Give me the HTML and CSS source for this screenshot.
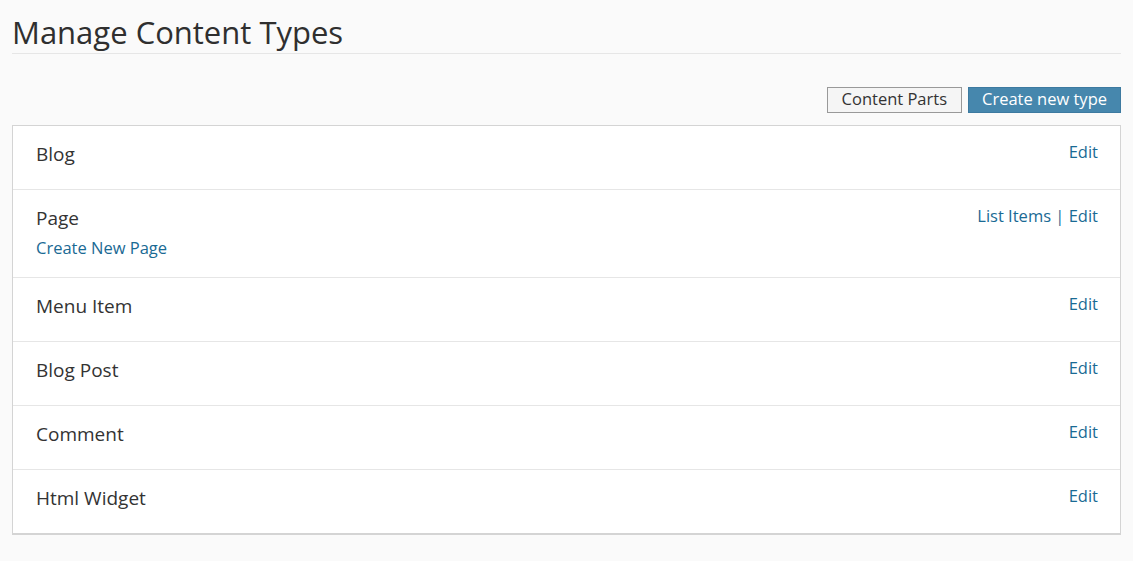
FILE: index.html
```html
<!DOCTYPE html>
<html>
<head>
<meta charset="utf-8">
<link rel="stylesheet" href="styles.css">
</head>
<body>
<div class="page">
  <h1 class="title">Manage Content Types</h1>
  <div class="actions">
    <button class="btn btn-default">Content Parts</button>
    <button class="btn btn-primary">Create new type</button>
  </div>
  <ul class="types">
    <li class="type">
      <div class="info"><div class="name">Blog</div></div>
      <div class="links"><a href="#">Edit</a></div>
    </li>
    <li class="type">
      <div class="info"><div class="name">Page</div><a class="create" href="#">Create New Page</a></div>
      <div class="links"><a href="#">List Items</a> <span class="sep">|</span> <a href="#">Edit</a></div>
    </li>
    <li class="type">
      <div class="info"><div class="name">Menu Item</div></div>
      <div class="links"><a href="#">Edit</a></div>
    </li>
    <li class="type">
      <div class="info"><div class="name">Blog Post</div></div>
      <div class="links"><a href="#">Edit</a></div>
    </li>
    <li class="type">
      <div class="info"><div class="name">Comment</div></div>
      <div class="links"><a href="#">Edit</a></div>
    </li>
    <li class="type">
      <div class="info"><div class="name">Html Widget</div></div>
      <div class="links"><a href="#">Edit</a></div>
    </li>
  </ul>
</div>
</body>
</html>
```
FILE: styles.css
```css
html, body {
  margin: 0;
  padding: 0;
  background: #fafafa;
}
body {
  font-family: "Open Sans", "Noto Sans", sans-serif;
  color: #333;
}
.page {
  padding: 12px 12px 0 12px;
  width: 1109px;
}
.title {
  margin: 0;
  font-size: 31px;
  font-weight: 400;
  line-height: 38px;
  padding: 1px 0 2px 0;
  border-bottom: 1px solid #e6e6e6;
  color: #2f2f2f;
}
.actions {
  display: flex;
  justify-content: flex-end;
  gap: 6px;
  margin-top: 33px;
  margin-bottom: 12px;
}
.btn {
  font-family: inherit;
  font-size: 16.5px;
  box-sizing: border-box;
  height: 26px;
  padding: 1px 14px 3px;
  line-height: 20px;
  cursor: pointer;
  margin: 0;
}
.btn-default {
  background: #f5f5f5;
  border: 1px solid #999;
  color: #333;
}
.btn-primary {
  background: #4687ad;
  border: 1px solid #3d7aa0;
  color: #fff;
  padding-left: 13px;
  padding-right: 13px;
}
.types {
  list-style: none;
  margin: 0;
  padding: 0;
  background: #fff;
  border: 1px solid #d4d4d4;
  border-bottom-width: 2px;
}
.type {
  display: flex;
  justify-content: space-between;
  align-items: flex-start;
  padding: 12px 22px 19px 23px;
  border-top: 1px solid #e6e6e6;
}
.type:first-child {
  border-top: 0;
}
.name {
  font-size: 19px;
  line-height: 32px;
}
.create {
  display: block;
  font-size: 16.5px;
  line-height: 20px;
  margin-top: 4px;
}
a {
  color: #1a6a94;
  text-decoration: none;
}
.links {
  font-size: 16.5px;
  line-height: 20px;
  color: #1a6a94;
  margin-top: 4px;
}
.sep {
  color: #1a6a94;
}
```
